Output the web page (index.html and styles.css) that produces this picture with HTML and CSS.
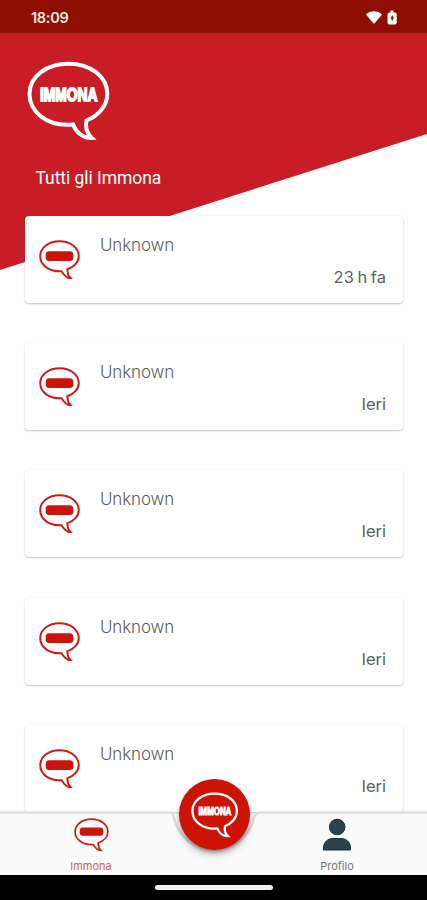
FILE: index.html
```html
<!DOCTYPE html>
<html lang="it">
<head>
<meta charset="utf-8">
<title>Immona</title>
<link rel="stylesheet" href="styles.css">
</head>
<body>
<div class="phone">
  <header class="status">
    <span class="clock">18:09</span>
    <svg class="status-icons" viewBox="0 0 34 18">
      <path d="M1 5.500C5.500 1.300 12.500 1.300 17 5.500L9 15Z" fill="#fff"/>
      <path d="M25.500 1.500h3v2h1.200q2 0 2 2v8q0 2-2 2h-5.200q-2 0-2-2v-8q0-2 2-2h1z" fill="#fff"/>
      <path d="M27.300 6l-1.500 3 1.500 3 1.500-3z" fill="#970f05"/>
    </svg>
  </header>
  <main class="content">
    <svg class="logo" viewBox="0 0 84 80">
      <path id="outline" d="M46 63.500C19 66 2.500 50 2.500 33C2.500 15 20 2.700 41.500 2.700C63 2.700 80.300 15 80.300 33C80.300 45 71 55 59.500 59.500C58 66 60 72.500 64.800 77C56 77.500 49 71 46 63.500Z" fill="none" stroke="#fff" stroke-width="4" stroke-linejoin="miter"/>
      <text x="13" y="39.700" textLength="57.500" lengthAdjust="spacingAndGlyphs" class="logo-text">IMMONA</text>
    </svg>
    <h1 class="title">Tutti gli Immona</h1>
    <section class="list">
      <article class="card">
        <svg class="avatar" viewBox="0 0 40 39">
          <g id="bubble">
            <path d="M22 30.500C10 31.300 1.200 24.500 1.200 15.800C1.200 7.500 9.500 1.300 20 1.300C30.500 1.300 38.800 7.500 38.800 15.800C38.800 21.500 34 26.500 27.500 28.700L28.700 34.500L31 37.200C27 37.500 24.500 34.500 22 30.500Z" fill="none" stroke="#c91d17" stroke-width="1.900" stroke-linejoin="miter"/>
            <rect x="6.500" y="11" width="27" height="9.500" rx="3.500" fill="#cb150a"/>
          </g>
        </svg>
        <div class="body"><span class="name">Unknown</span><time class="time">23 h fa</time></div>
      </article>
      <article class="card"><svg class="avatar" viewBox="0 0 40 39"><use href="#bubble"/></svg><div class="body"><span class="name">Unknown</span><time class="time">Ieri</time></div></article>
      <article class="card"><svg class="avatar" viewBox="0 0 40 39"><use href="#bubble"/></svg><div class="body"><span class="name">Unknown</span><time class="time">Ieri</time></div></article>
      <article class="card"><svg class="avatar" viewBox="0 0 40 39"><use href="#bubble"/></svg><div class="body"><span class="name">Unknown</span><time class="time">Ieri</time></div></article>
      <article class="card"><svg class="avatar" viewBox="0 0 40 39"><use href="#bubble"/></svg><div class="body"><span class="name">Unknown</span><time class="time">Ieri</time></div></article>
    </section>
  </main>
  <nav class="tabs">
    <svg class="tabs-shape" viewBox="0 0 427 63">
      <path d="M0 1H168Q173 1 174 6A41 41 0 0 0 254 6Q255 1 260 1H427V63H0Z" fill="#fafafa"/>
      <path d="M0 0.500H168Q173 0.500 174 6A41 41 0 0 0 254 6Q255 0.500 260 0.500H427" fill="none" stroke="#dedede" stroke-width="2.500"/>
    </svg>
    <a class="tab active"><svg class="tab-bubble" viewBox="0 0 40 39"><use href="#bubble"/></svg><span>Immona</span></a>
    <a class="tab profile">
      <svg class="tab-user" viewBox="0 0 30 34"><circle cx="15.200" cy="9" r="7.800" fill="#2b434e" stroke="#152e3a"/><path d="M1.500 32V30C1.500 24 6 20.500 11 20.500H19C24 20.500 28.500 24 28.500 30V32Z" fill="#2b434e" stroke="#152e3a"/></svg>
      <span>Profilo</span>
    </a>
    <button class="fab">
      <svg class="fab-logo" viewBox="0 0 84 80">
        <use href="#outline"/>
        <text x="13" y="39.700" textLength="57.500" lengthAdjust="spacingAndGlyphs" class="logo-text">IMMONA</text>
      </svg>
    </button>
  </nav>
  <footer class="system"><div class="handle"></div></footer>
</div>
</body>
</html>
```
FILE: styles.css
```css
* { box-sizing: border-box; }
body { margin: 0; background: #fff; font-family: Roboto, sans-serif; }
.phone { display: flex; flex-direction: column; width: 427px; height: 900px; overflow: hidden; }

.status {
  flex: none; display: flex; justify-content: space-between; align-items: center;
  height: 33px; padding: 2px 28px 0 31px; background: #8e0e02; color: #fff;
}
.clock { font: 600 14.500px/18px Inter, sans-serif; color: #fbe9e6; letter-spacing: -0.3px; }
.status-icons { width: 34px; height: 18px; }

.content {
  flex: 1; min-height: 0; padding: 28px 24px 0 25px; background: #fefefe;
  position: relative; isolation: isolate;
}
.content::before {
  content: ""; position: absolute; z-index: -1; inset: 0 0 auto; height: 237px;
  background: #c91d26; clip-path: polygon(0 0, 100% 0, 100% 101px, 0 100%);
}
.logo { display: block; width: 84px; height: 80px; margin-left: 2px; }
.logo-text {
  font: 700 19px "Liberation Sans", sans-serif; fill: #fff; stroke: #fff; stroke-width: 1.800px;
}
.title { margin: 26px 0 0 10.500px; font: 400 17.500px/22px Roboto, sans-serif; letter-spacing: -.05px; color: #fff; }
.list { display: flex; flex-direction: column; gap: 40.200px; margin-top: 27px; }
.card {
  flex: none; display: flex; gap: 20px; height: 87px; padding: 24px 17px 0 14px;
  background: #fff; border-radius: 4px;
  box-shadow: 0 1px 2px rgba(0, 0, 0, .22), 0 0 1px rgba(0, 0, 0, .08);
}
.avatar { flex: none; width: 41px; height: 40px; }
.body { flex: 1; display: flex; flex-direction: column; margin-top: -6px; }
.name { font: 300 17px/22px Inter, sans-serif; letter-spacing: -.15px; color: #606060; }
.time { align-self: flex-end; margin-top: 10px; font: 400 16.500px/22px Inter, sans-serif; word-spacing: -1px; color: #606060; }

.tabs {
  flex: none; position: relative; display: flex; justify-content: space-between;
  height: 63px; padding: 6px 62px 0; isolation: isolate;
}
.tabs-shape { position: absolute; z-index: -1; left: 0; top: 0; width: 427px; height: 63px; overflow: visible; }
.tab {
  display: flex; flex-direction: column; align-items: center; width: 58px;
  font: 400 11px/14px Inter, sans-serif; color: #777;
}
.tab.active { color: #d85d5d; }
.tab.profile { margin-right: -1px; }
.tab span { margin-top: 7px; }
.tab-bubble { width: 35px; height: 34px; }
.tab-user { width: 30px; height: 34px; }
.fab {
  position: absolute; left: 179px; top: -33px; width: 71px; height: 71px; padding: 0;
  display: grid; place-items: center; border: 0; border-radius: 50%; background: #cd1206;
  box-shadow: 0 3px 4px rgba(0, 0, 0, .3), 0 6px 9px rgba(0, 0, 0, .12);
}
.fab-logo { width: 48px; height: 46px; }
.system { flex: none; display: flex; justify-content: center; height: 25px; padding-top: 10px; background: #000; }
.handle { width: 118px; height: 5px; border-radius: 3px; background: #eee; }
```
